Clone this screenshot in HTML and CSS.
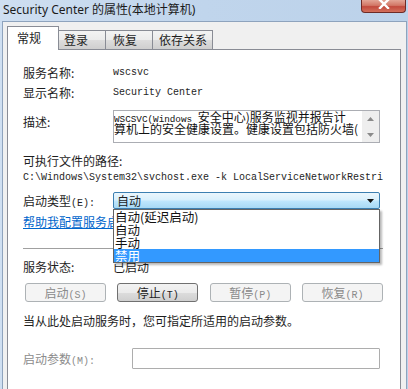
FILE: index.html
```html
<!DOCTYPE html>
<html lang="zh-CN">
<head>
<meta charset="utf-8">
<title>Security Center 的属性(本地计算机)</title>
<link rel="stylesheet" href="styles.css">
</head>
<body>
<div class="window">
  <div class="titlebar">
    <span class="title">Security Center 的属性(本地计算机)</span>
    <div class="close"><svg class="close-x" width="14" height="9" viewBox="0 0 14 9"><path d="M3 0 L11 8 M11 0 L3 8" stroke="#ffffff" stroke-width="2.4" stroke-linecap="square"/></svg></div>
  </div>
  <div class="frame">
    <div class="client">
      <div class="tabs">
        <div class="tab tab-active">常规</div>
        <div class="tab tab-login">登录</div>
        <div class="tab tab-recover">恢复</div>
        <div class="tab tab-deps">依存关系</div>
      </div>
      <div class="panel">
        <div class="row row-name"><span class="label">服务名称:</span><span class="mono">wscsvc</span></div>
        <div class="row row-display"><span class="label">显示名称:</span><span class="mono">Security Center</span></div>
        <div class="row row-desc">
          <span class="label label-desc">描述:</span>
          <div class="desc">
            <div class="desc-text">
              <div class="desc-line"><span class="asc">WSCSVC(Windows </span>安全中心)服务监视并报告计</div>
              <div class="desc-line">算机上的安全健康设置。健康设置包括防火墙(</div>
            </div>
            <div class="vscroll">
              <svg width="7" height="4" viewBox="0 0 7 4"><path d="M0 4 L3.5 0 L7 4 Z" fill="#8a8a8a"/></svg>
              <svg width="7" height="4" viewBox="0 0 7 4"><path d="M0 0 L3.5 4 L7 0 Z" fill="#8a8a8a"/></svg>
            </div>
          </div>
        </div>
        <div class="path-label">可执行文件的路径:</div>
        <div class="mono path">C:\Windows\System32\svchost.exe -k LocalServiceNetworkRestri</div>
        <div class="row row-type">
          <span class="label label-type">启动类型<span class="key">(E):</span></span>
          <div class="combo">
            <span class="combo-text">自动</span>
            <svg class="combo-arrow" width="7" height="4" viewBox="0 0 7 4"><path d="M0 0 L7 0 L3.5 4 Z" fill="#111111"/></svg>
            <div class="droplist">
              <div class="opt">自动(延迟启动)</div>
              <div class="opt">自动</div>
              <div class="opt">手动</div>
              <div class="opt opt-sel">禁用</div>
            </div>
          </div>
        </div>
        <a class="link">帮助我配置服务启动选项。</a>
        <div class="sep"></div>
        <div class="row row-status"><span class="label">服务状态:</span><span class="status">已启动</span></div>
        <div class="buttons">
          <div class="btn btn-disabled">启动<span class="key">(S)</span></div>
          <div class="btn">停止<span class="key">(T)</span></div>
          <div class="btn btn-disabled">暂停<span class="key">(P)</span></div>
          <div class="btn btn-disabled">恢复<span class="key">(R)</span></div>
        </div>
        <div class="hint">当从此处启动服务时，您可指定所适用的启动参数。</div>
        <div class="row row-param">
          <span class="label label-param">启动参数<span class="key">(M):</span></span>
          <div class="input"></div>
        </div>
      </div>
    </div>
  </div>
</div>
</body>
</html>
```

FILE: styles.css
```css
* { box-sizing: border-box; }
html, body { margin: 0; padding: 0; }
body {
  width: 408px;
  height: 389px;
  overflow: hidden;
  background: #c2d6ec;
  font-family: "Noto Sans CJK SC", sans-serif;
  font-size: 12px;
  color: #1e1e1e;
}
.window {
  width: 408px;
  height: 389px;
  display: flex;
  flex-direction: column;
  background: linear-gradient(90deg, #cfdff1, #c0d5ec 50%, #bcd2ea);
}
.titlebar {
  height: 21px;
  flex: none;
  display: flex;
  justify-content: space-between;
  align-items: flex-start;
}
.title {
  font-family: "Noto Sans", "Noto Sans CJK SC", sans-serif;
  font-size: 12px;
  line-height: 14px;
  padding: 3px 0 0 3px;
  color: #1b1b1b;
  white-space: nowrap;
}
.close {
  width: 45px;
  height: 13px;
  margin-right: 2px;
  border: 1px solid #6e2b26;
  border-top: none;
  border-radius: 0 0 4px 4px;
  background: linear-gradient(#e3a596, #d27766 45%, #c24a3d 55%, #d3705c);
  display: flex;
  justify-content: center;
  align-items: flex-start;
}
.close-x { display: block; }
.frame {
  flex: 1;
  min-height: 0;
  display: flex;
  padding: 0 4px 0 2px;
}
.client {
  flex: 1;
  min-height: 0;
  display: flex;
  flex-direction: column;
  background: #f0f0f0;
  border: 1px solid #8ea3bd;
  border-bottom: none;
  padding: 4px 5px 0 4px;
}
.tabs {
  flex: none;
  height: 23px;
  display: flex;
  align-items: flex-end;
}
.tab {
  height: 19px;
  border: 1px solid #898c95;
  border-bottom: none;
  background: linear-gradient(#f3f3f3, #ebebeb 50%, #dddddd 50%, #cfcfcf);
  line-height: 18px;
  padding-left: 5px;
  margin-left: -1px;
  white-space: nowrap;
  color: #1e1e1e;
}
.tab-active {
  height: 24px;
  margin: 0 0 -1px 0;
  background: #ffffff;
  position: relative;
  z-index: 1;
  line-height: 22px;
  padding-left: 9px;
  width: 52px;
}
.tab-login { width: 48px; }
.tab-recover { width: 48px; padding-left: 7px; }
.tab-deps { width: 61px; padding-left: 6px; }
.panel {
  flex: 1;
  min-height: 0;
  background: #ffffff;
  border: 1px solid #898c95;
  border-bottom: none;
  padding: 15px 17px 0 15px;
}
.row {
  display: flex;
  align-items: flex-start;
  line-height: 16px;
}
.label {
  width: 90px;
  flex: none;
  white-space: nowrap;
}
.mono {
  font-family: "Liberation Mono", monospace;
  font-size: 10px;
  white-space: nowrap;
}
.key {
  font-family: "Liberation Mono", monospace;
  font-size: 10px;
}
.row-display { margin-top: 4px; }
.row-desc { margin-top: 9px; }
.label-desc { padding-top: 4px; }
.desc {
  width: 267px;
  height: 33px;
  border: 1px solid #abadb3;
  background: #ffffff;
  display: flex;
}
.desc-text {
  flex: 1;
  min-width: 0;
  overflow: hidden;
  font-size: 12px;
  line-height: 12px;
  padding-top: 0;
  color: #111111;
}
.desc-line { white-space: nowrap; height: 12px; }
.asc {
  font-family: "Liberation Mono", monospace;
  font-size: 9.3px;
}
.vscroll {
  width: 17px;
  flex: none;
  background: #eeeeee;
  display: flex;
  flex-direction: column;
  align-items: center;
  justify-content: space-between;
  padding: 6px 0 5px;
}
.vscroll svg { display: block; }
.path-label { margin-top: 10px; line-height: 16px; white-space: nowrap; }
.path { margin-top: 1px; line-height: 15px; display: block; }
.row-type { margin-top: 7px; }
.label-type { line-height: 17px; }
.combo {
  position: relative;
  width: 267px;
  height: 17px;
  border: 1px solid #3c7fb1;
  border-radius: 2px;
  background: linear-gradient(#eaf6fd, #d9f0fc 45%, #bee6fd 55%, #a7d9f5);
  display: flex;
  align-items: center;
}
.combo-text { padding-left: 3px; line-height: 15px; }
.combo-arrow { display: block; margin-left: auto; margin-right: 5px; }
.droplist {
  position: absolute;
  left: -1px;
  top: calc(100% + 1px);
  width: 267px;
  background: #ffffff;
  border: 1px solid #646464;
  box-shadow: 2px 2px 2px rgba(0, 0, 0, 0.28);
  z-index: 5;
}
.opt {
  height: 13px;
  line-height: 13px;
  padding-left: 1px;
  font-size: 12.5px;
  white-space: nowrap;
  color: #111111;
}
.opt-sel { background: #3399ff; color: #ffffff; }
.link {
  display: block;
  margin-top: 2px;
  line-height: 16px;
  color: #0066cc;
  text-decoration: underline;
  white-space: nowrap;
}
.sep {
  margin-top: 18px;
  height: 1px;
  background: #a0a0a0;
}
.row-status { margin-top: 10px; }
.buttons {
  margin-top: 8px;
  padding-left: 2px;
  display: flex;
  justify-content: space-between;
}
.btn {
  width: 81px;
  height: 19px;
  border: 1px solid #707070;
  border-radius: 3px;
  background: linear-gradient(#f2f2f2, #ebebeb 50%, #dddddd 50%, #cfcfcf);
  text-align: center;
  line-height: 17px;
  white-space: nowrap;
  color: #1e1e1e;
}
.btn-disabled {
  border-color: #adb2b5;
  background: #f4f4f4;
  color: #8a8a8a;
}
.hint { margin-top: 11px; line-height: 16px; white-space: nowrap; }
.row-param { margin-top: 19px; }
.label-param { width: 109px; line-height: 21px; color: #8c8c8c; }
.input {
  width: 248px;
  height: 21px;
  border: 1px solid #adadad;
  border-radius: 1px;
  background: #ffffff;
}
```
